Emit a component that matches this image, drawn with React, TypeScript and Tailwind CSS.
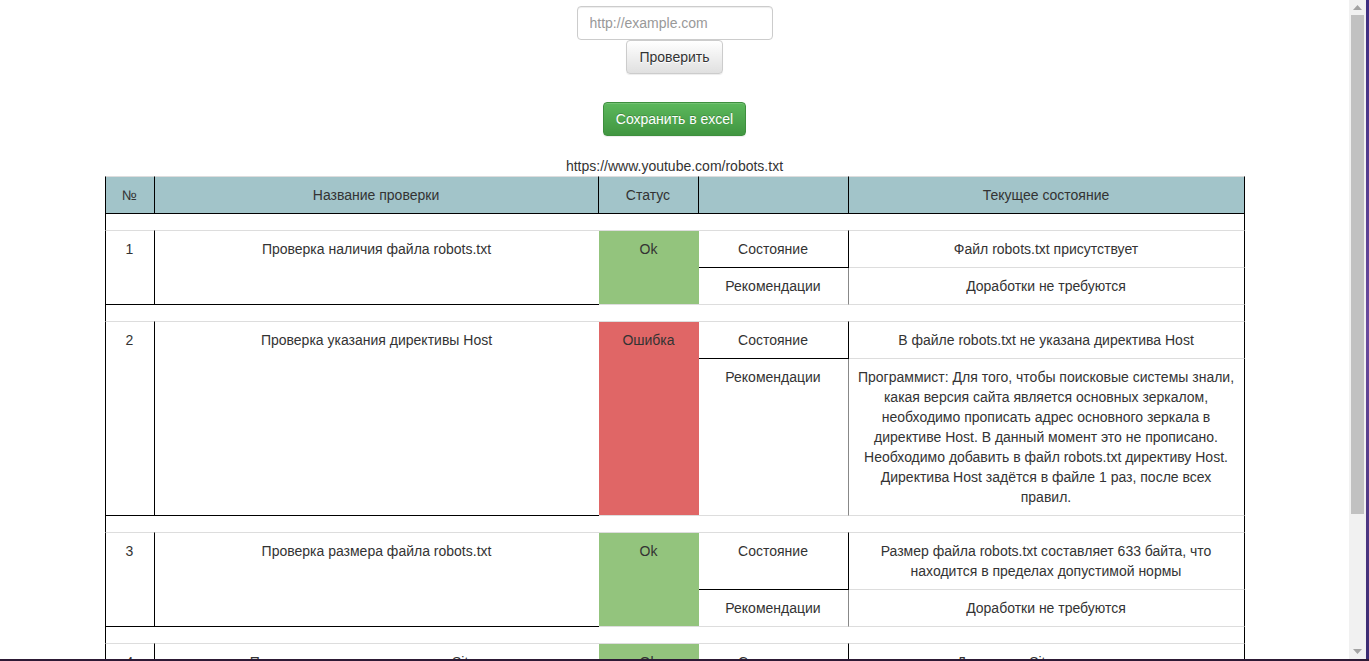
import React from 'react';

type Check = {
  n: number;
  name: string;
  ok: boolean;
  state: string;
  advice: string;
};

const checks: Check[] = [
  {
    n: 1,
    name: 'Проверка наличия файла robots.txt',
    ok: true,
    state: 'Файл robots.txt присутствует',
    advice: 'Доработки не требуются',
  },
  {
    n: 2,
    name: 'Проверка указания директивы Host',
    ok: false,
    state: 'В файле robots.txt не указана директива Host',
    advice:
      'Программист: Для того, чтобы поисковые системы знали, какая версия сайта является основных зеркалом, необходимо прописать адрес основного зеркала в директиве Host. В данный момент это не прописано. Необходимо добавить в файл robots.txt директиву Host. Директива Host задётся в файле 1 раз, после всех правил.',
  },
  {
    n: 3,
    name: 'Проверка размера файла robots.txt',
    ok: true,
    state: 'Размер файла robots.txt составляет 633 байта, что находится в пределах допустимой нормы',
    advice: 'Доработки не требуются',
  },
  {
    n: 4,
    name: 'Проверка указания директивы Sitemap',
    ok: true,
    state: 'Директива Sitemap указана',
    advice: 'Доработки не требуются',
  },
];

const cell = 'px-2 py-2 text-center align-top font-normal leading-5';
const head = `${cell} bg-[#a2c4c9] border-t border-b border-r border-t-[#ddd] border-b-black border-r-black`;

function Spacer() {
  return (
    <tr>
      <td colSpan={5} className="h-4 p-0 border-x border-black" />
    </tr>
  );
}

function CheckRows({ c }: { c: Check }) {
  return (
    <>
      <tr>
        <td rowSpan={2} className={`${cell} border border-l-black border-r-black border-t-[#ddd] border-b-black`}>
          {c.n}
        </td>
        <td rowSpan={2} className={`${cell} border-t border-b border-t-[#ddd] border-b-black`}>
          {c.name}
        </td>
        <td
          rowSpan={2}
          className={`${cell} border-t border-b border-[#ddd] ${c.ok ? 'bg-[#93c47d]' : 'bg-[#e06666]'}`}
        >
          {c.ok ? 'Ok' : 'Ошибка'}
        </td>
        <td className={`${cell} border-t border-b border-r border-t-[#ddd] border-b-black border-r-black`}>Состояние</td>
        <td className={`${cell} border-t border-b border-r border-t-[#ddd] border-b-[#ddd] border-r-black`}>{c.state}</td>
      </tr>
      <tr>
        <td className={`${cell} border-b border-r border-b-[#ddd] border-r-[#888]`}>Рекомендации</td>
        <td className={`${cell} border-b border-r border-b-[#ddd] border-r-black`}>{c.advice}</td>
      </tr>
    </>
  );
}

function Scrollbar() {
  return (
    <div className="flex w-[17px] flex-col bg-[#f1f1f1]">
      <div className="flex h-[15px] items-center justify-center">
        <svg width="9" height="5" viewBox="0 0 9 5">
          <path d="M0 5 L4.5 0 L9 5 Z" fill="#a3a3a3" />
        </svg>
      </div>
      <div className="mx-[2px] h-[499px] bg-[#c1c1c1]" />
      <div className="flex-1" />
      <div className="flex h-[15px] items-center justify-center">
        <svg width="9" height="5" viewBox="0 0 9 5">
          <path d="M0 0 L9 0 L4.5 5 Z" fill="#a3a3a3" />
        </svg>
      </div>
    </div>
  );
}

export default function App() {
  return (
    <div className="flex h-[661px] w-[1369px] flex-col overflow-hidden bg-white">
      <div className="flex min-h-0 flex-1">
        <main className="h-full w-[1349px] overflow-hidden bg-white font-['Liberation_Sans',Arial,sans-serif] text-[14px] leading-5 text-[#333]">
          <div className="flex flex-col items-center pt-[6px]">
            <input
              type="text"
              placeholder="http://example.com"
              className="h-[34px] w-[196px] rounded border border-[#ccc] px-3 py-1.5 text-[14px] text-[#555] shadow-[inset_0_1px_1px_rgba(0,0,0,0.075)] outline-none placeholder:text-[#999]"
            />
            <button className="h-[34px] rounded border border-[#ccc] bg-linear-to-b from-white to-[#e0e0e0] px-3 py-1.5 leading-5 text-[#333] shadow-[0_1px_1px_rgba(0,0,0,0.075)] [text-shadow:0_1px_0_#fff]">
              Проверить
            </button>
            <button className="mt-[28px] h-[34px] rounded border border-[#3e8f3e] bg-linear-to-b from-[#5cb85c] to-[#419641] px-3 py-1.5 leading-5 text-white shadow-[inset_0_1px_0_rgba(255,255,255,0.15),0_1px_1px_rgba(0,0,0,0.075)] [text-shadow:0_-1px_0_rgba(0,0,0,0.2)]">
              Сохранить в excel
            </button>
            <p className="mt-5">https://www.youtube.com/robots.txt</p>
          </div>
          <table className="mx-auto w-[1140px] table-fixed border-separate border-spacing-0">
            <thead>
              <tr>
                <th className={`${head} w-[50px] border-l border-l-black`}>№</th>
                <th className={`${head} w-[444px]`}>Название проверки</th>
                <th className={`${head} w-[100px]`}>Статус</th>
                <th className={`${head} w-[150px]`}></th>
                <th className={`${head} w-[396px]`}>Текущее состояние</th>
              </tr>
            </thead>
            <tbody>
              {checks.map((c) => (
                <React.Fragment key={c.n}>
                  <Spacer />
                  <CheckRows c={c} />
                </React.Fragment>
              ))}
            </tbody>
          </table>
        </main>
        <Scrollbar />
        <div className="w-[3px] bg-linear-to-b from-[#3d2d80] via-[#6a4a9e] to-[#3a2a70]" />
      </div>
      <div className="h-[2px] bg-[#2d1a35]" />
    </div>
  );
}
